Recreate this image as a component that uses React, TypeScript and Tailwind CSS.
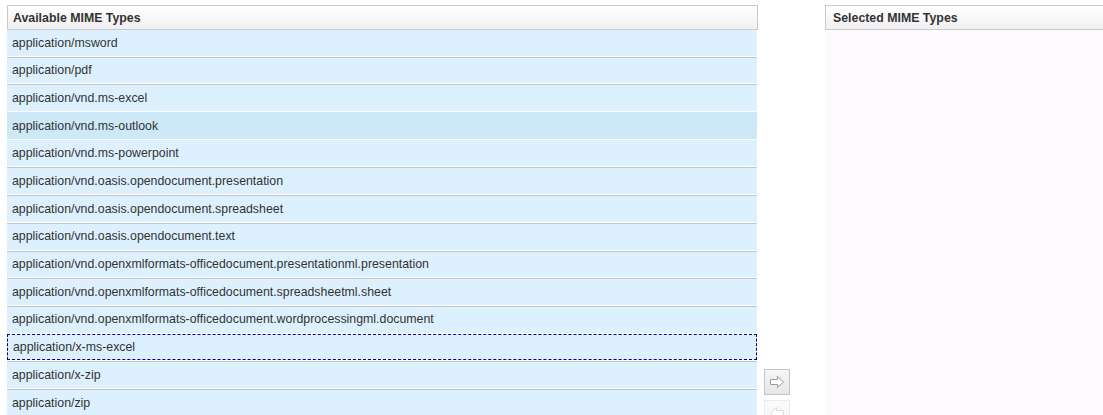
import { useState } from 'react';

const mimeTypes = [
  'application/msword',
  'application/pdf',
  'application/vnd.ms-excel',
  'application/vnd.ms-outlook',
  'application/vnd.ms-powerpoint',
  'application/vnd.oasis.opendocument.presentation',
  'application/vnd.oasis.opendocument.spreadsheet',
  'application/vnd.oasis.opendocument.text',
  'application/vnd.openxmlformats-officedocument.presentationml.presentation',
  'application/vnd.openxmlformats-officedocument.spreadsheetml.sheet',
  'application/vnd.openxmlformats-officedocument.wordprocessingml.document',
  'application/x-ms-excel',
  'application/x-zip',
  'application/zip',
];

const ArrowIcon = ({ left = false, faded = false }: { left?: boolean; faded?: boolean }) => (
  <svg width="16" height="14" viewBox="0 0 16 14" className={left ? 'rotate-180' : ''}>
    <path
      d="M1.5 4.5 H8.5 V1.5 L14.5 7 L8.5 12.5 V9.5 H1.5 Z"
      fill="#ffffff"
      stroke={faded ? '#dcdcdc' : '#9a9a9a'}
      strokeWidth="1"
      strokeLinejoin="miter"
    />
  </svg>
);

export default function App() {
  const [hovered] = useState(3);
  const focused = 11;

  const rowBorder = (i: number) => {
    if (i === focused) return 'border border-dashed border-[#00008b]';
    if (i === hovered || i === hovered + 1) return 'border-t border-transparent';
    return 'border-t border-[#c4c4c4]';
  };

  return (
    <div
      className="flex h-[415px] w-[1103px] overflow-hidden bg-white pl-[7px] pt-[5px] text-[12.35px] text-[#333]"
      style={{ fontFamily: '"Liberation Sans", Arial, sans-serif' }}
    >
      <div className="flex w-[751px] shrink-0 flex-col">
        <div className="flex h-[25px] shrink-0 items-center border border-[#cacaca] bg-gradient-to-b from-white to-[#f1eff2] pl-[5px] pt-[2px] font-bold">
          Available MIME Types
        </div>
        <div className="flex shrink-0 flex-col pr-px">
          {mimeTypes.map((type, i) =>
            i === 0 ? (
              <div key={type} className="flex h-[25.7px] shrink-0 items-center bg-[#ddf0fe] pl-[5px]">
                {type}
              </div>
            ) : (
              <div key={type} className="shrink-0 pt-px">
                <div
                  className={`flex h-[26.7px] items-center pl-[5px] ${
                    i === hovered ? 'bg-[#cde8f6]' : 'bg-[#ddf0fe]'
                  } ${rowBorder(i)}`}
                >
                  {type}
                </div>
              </div>
            ),
          )}
        </div>
      </div>

      <div className="flex w-[67px] shrink-0 flex-col items-start gap-[5px] pl-[6px] pt-[364px]">
        <button
          type="button"
          className="flex h-[26px] w-[26px] shrink-0 items-center justify-center border border-[#c4c4c4] bg-gradient-to-b from-[#f6f6f6] to-[#e6e6e6]"
          aria-label="Add"
        >
          <ArrowIcon />
        </button>
        <button
          type="button"
          className="flex h-[26px] w-[26px] shrink-0 items-center justify-center border border-[#ececec] bg-gradient-to-b from-[#fbfbfb] to-[#f4f4f4]"
          aria-label="Remove"
        >
          <ArrowIcon left faded />
        </button>
      </div>

      <div className="flex flex-1 flex-col">
        <div className="flex h-[25px] shrink-0 items-center border border-r-0 border-[#cacaca] bg-gradient-to-b from-white to-[#f1eff2] pl-[7px] pt-[2px] font-bold">
          Selected MIME Types
        </div>
        <div className="flex-1 bg-[#fdfafe]" />
      </div>
    </div>
  );
}
